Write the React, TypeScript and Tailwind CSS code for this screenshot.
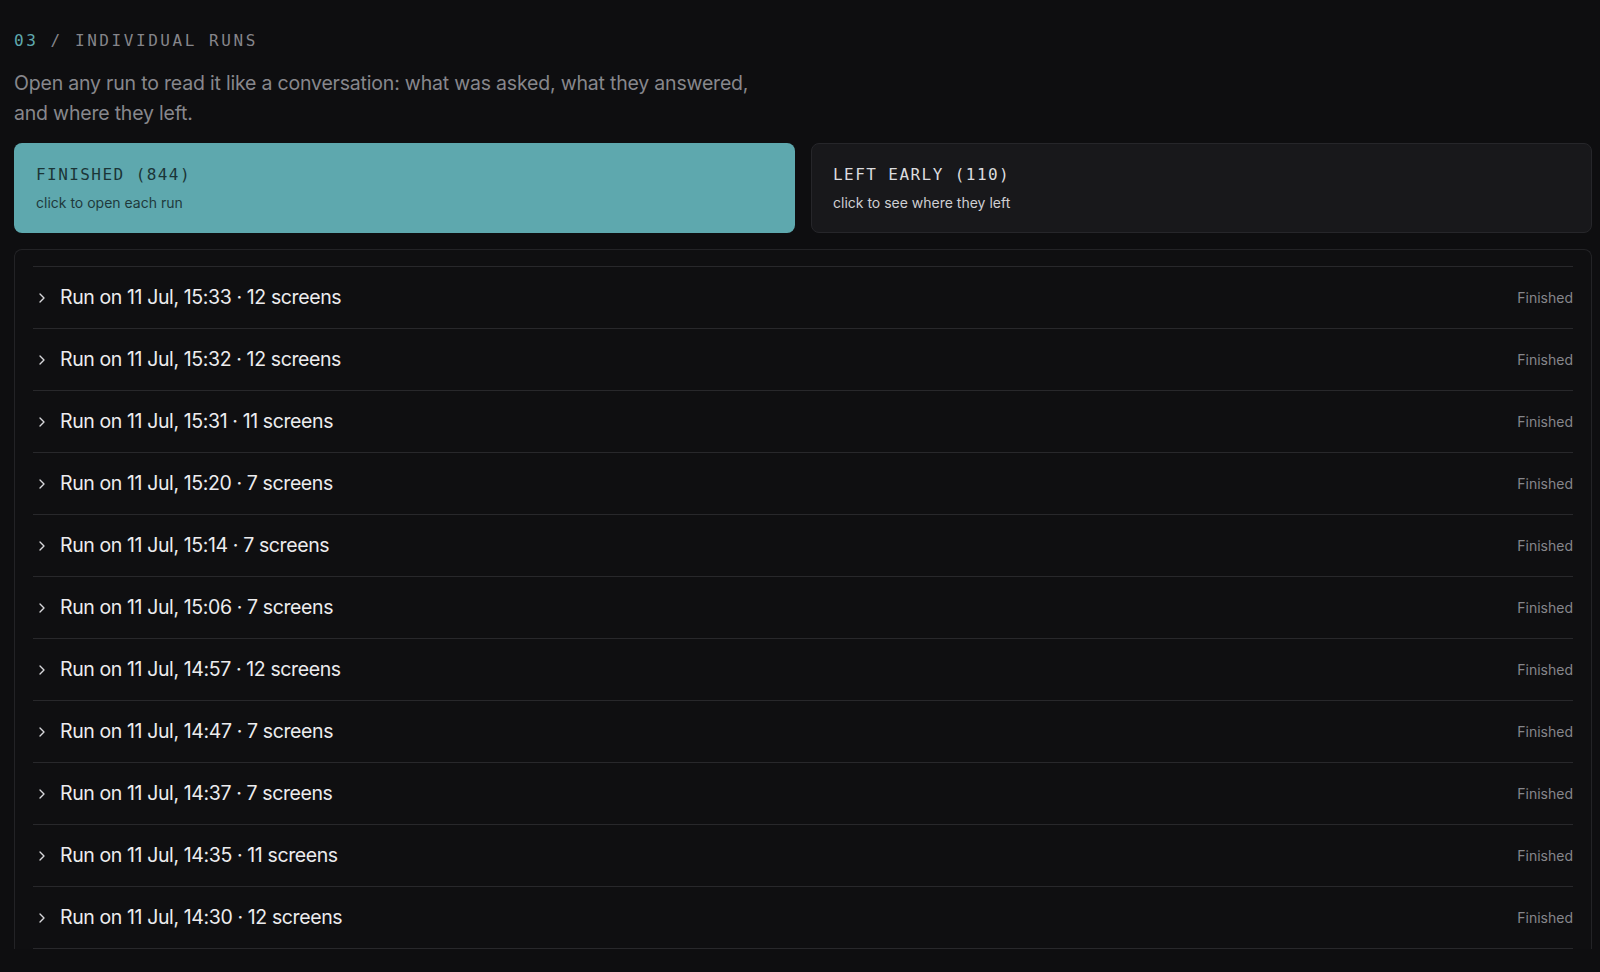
import React from "react";
import { ChevronRight } from "lucide-react";

const runs = [
  ["15:33", "12"],
  ["15:32", "12"],
  ["15:31", "11"],
  ["15:20", "7"],
  ["15:14", "7"],
  ["15:06", "7"],
  ["14:57", "12"],
  ["14:47", "7"],
  ["14:37", "7"],
  ["14:35", "11"],
  ["14:30", "12"],
];

export default function App() {
  return (
    <div
      className="min-h-[972px] w-full bg-[#0e0e10] pl-[14px] pr-[8px] pt-[31px]"
      style={{ fontFamily: "Inter, 'Noto Sans', sans-serif" }}
    >
      <div className="font-['DejaVu_Sans_Mono',monospace] text-[16px] leading-[20px] tracking-[0.16em] text-[#85858a]">
        <span className="text-[#5fa9af]">03</span> / INDIVIDUAL RUNS
      </div>
      <p className="mt-[18px] max-w-[745px] text-[19.5px] leading-[29.5px] tracking-[-0.01em] text-[#87878c]">
        Open any run to read it like a conversation: what was asked, what they answered, and where they left.
      </p>
      <div className="mt-[15px] grid grid-cols-2 gap-[16px]">
        <div className="rounded-[8px] bg-[#5ea8ae] pl-[22px] pt-[20px] pb-[20px]">
          <div className="font-['DejaVu_Sans_Mono',monospace] text-[16px] leading-[24px] tracking-[0.09em] text-[#1b3537]">
            FINISHED (844)
          </div>
          <div className="mt-[6px] text-[14px] leading-[20px] text-[#1e3a3c]">click to open each run</div>
        </div>
        <div className="rounded-[8px] border border-[#26262a] bg-[#18181b] pl-[21px] pt-[19px] pb-[19px]">
          <div className="font-['DejaVu_Sans_Mono',monospace] text-[16px] leading-[24px] tracking-[0.09em] text-[#dcdcdf]">
            LEFT EARLY (110)
          </div>
          <div className="mt-[6px] text-[14px] leading-[20px] text-[#cfcfd3]">click to see where they left</div>
        </div>
      </div>
      <div className="mt-[16px] rounded-t-[8px] border border-b-0 border-[#232326] bg-[#0f0f11] px-[18px] pt-[16px]">
        <div className="border-t border-[#28282b]">
          {runs.map(([t, n]) => (
            <div
              key={t}
              className="flex h-[62px] items-center border-b border-[#28282b] pl-[1px]"
            >
              <ChevronRight size={16} strokeWidth={2} className="text-[#d8d8db]" />
              <span className="ml-[10px] text-[19.5px] tracking-[-0.02em] text-[#ececee]">
                Run on 11 Jul, {t} · {n} screens
              </span>
              <span className="ml-auto text-[14px] text-[#86868b]">Finished</span>
            </div>
          ))}
        </div>
      </div>
    </div>
  );
}
